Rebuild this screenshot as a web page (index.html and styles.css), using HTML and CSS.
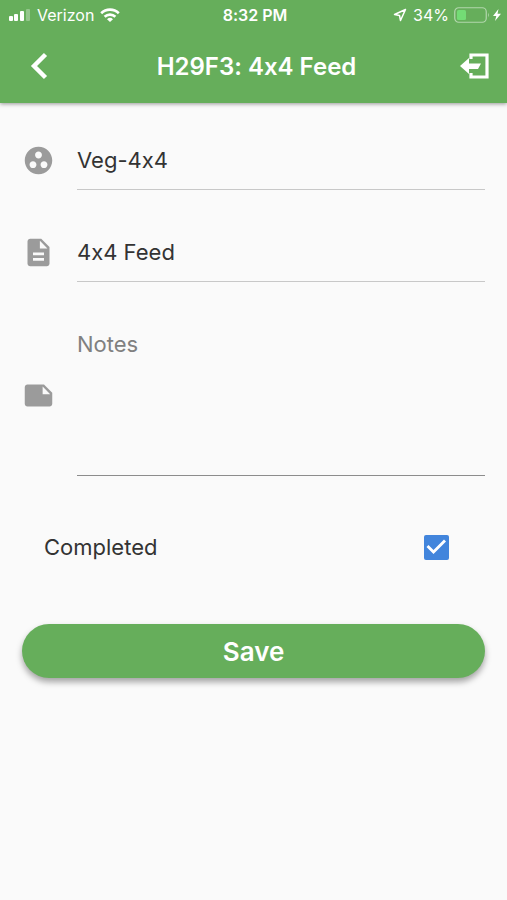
FILE: index.html
```html
<!doctype html>
<html lang="en">
<head>
<meta charset="utf-8">
<meta name="viewport" content="width=device-width, initial-scale=1">
<title>H29F3: 4x4 Feed</title>
<link rel="stylesheet" href="styles.css">
</head>
<body>
<header class="top">
	<div class="status">
		<div class="carrier">
			<svg width="22" height="14" viewBox="0 0 22 14" fill="#fff">
				<rect x="0" y="8" width="4" height="5" rx="1"/>
				<rect x="5" y="6" width="4" height="7" rx="1"/>
				<rect x="11" y="3" width="4" height="10" rx="1"/>
				<rect x="17" y="1" width="4" height="12" rx="1" opacity=".3"/>
			</svg>
			<span>Verizon</span>
			<svg width="20" height="14" viewBox="0 0 20 14" fill="none" stroke="#fff" stroke-width="2.6">
				<path d="M1.200 5.200a12.600 12.600 0 0 1 17.600 0"/>
				<path d="M4.600 8.800a7.800 7.800 0 0 1 10.800 0"/>
				<path d="M10 14L7 11.200a4.300 4.300 0 0 1 6 0z" fill="#fff" stroke="none"/>
			</svg>
		</div>
		<span class="time">8:32 PM</span>
		<div class="power">
			<svg width="14" height="14" viewBox="0 0 14 14" fill="none" stroke="#fff" stroke-width="1.5" stroke-linejoin="round">
				<path d="M12.500 1.500L1.500 6.500l5 1 1 5z"/>
			</svg>
			<span>34%</span>
			<svg class="battery" width="36" height="16" viewBox="0 0 36 16">
				<rect x=".75" y=".75" width="31.5" height="14.5" rx="4" fill="none" stroke="#fff" stroke-opacity=".5" stroke-width="1.2"/>
				<rect x="3" y="3" width="9" height="10" rx="1.5" fill="#73dc75"/>
				<path d="M34 5.500q1.800 2.500 0 5z" fill="#fff" opacity=".5"/>
			</svg>
			<svg width="8" height="12" viewBox="0 0 8 12" fill="#fff">
				<path d="M5.500 0L0 7h3.300L2 12l6-7.200H4.500z"/>
			</svg>
		</div>
	</div>
	<div class="bar">
		<button class="icon-btn" type="button" aria-label="Back">
			<svg width="32" height="32" viewBox="0 0 32 32" fill="none" stroke="#fff" stroke-width="4.4">
				<path d="M23.500 3.500L12 15l11.500 11.500"/>
			</svg>
		</button>
		<h1>H29F3: 4x4 Feed</h1>
		<button class="icon-btn" type="button" aria-label="Exit">
			<svg width="32" height="32" viewBox="0 0 32 32">
				<path d="M12 8V4h16v22H12v-4" fill="none" stroke="#fff" stroke-width="3.2"/>
				<path d="M1 15l9-8v5.500h12l-3 5.500h-9v5z" fill="#fff"/>
			</svg>
		</button>
	</div>
</header>

<form class="form">
	<div class="field">
		<svg class="icon" viewBox="0 0 24 24">
			<path d="M12 2C6.480 2 2 6.480 2 12s4.480 10 10 10 10-4.480 10-10S17.520 2 12 2zM8 17.500c-1.380 0-2.500-1.120-2.500-2.500s1.120-2.500 2.500-2.500 2.500 1.120 2.500 2.500-1.120 2.500-2.500 2.500zM9.500 8c0-1.380 1.120-2.500 2.500-2.500s2.500 1.120 2.500 2.500-1.120 2.500-2.500 2.500S9.500 9.380 9.500 8zm6.500 9.500c-1.380 0-2.500-1.120-2.500-2.500s1.120-2.500 2.500-2.500 2.500 1.120 2.500 2.500-1.120 2.500-2.500 2.500z"/>
		</svg>
		<input type="text" value="Veg-4x4" aria-label="Group">
	</div>
	<div class="field">
		<svg class="icon" viewBox="0 0 24 24">
			<path d="M14 2H6c-1.100 0-1.990.9-1.990 2L4 20c0 1.100.89 2 1.990 2H18c1.100 0 2-.9 2-2V8l-6-6zm2 16H8v-2h8v2zm0-4H8v-2h8v2zm-3-5V3.500L18.500 9H13z"/>
		</svg>
		<input type="text" value="4x4 Feed" aria-label="Title">
	</div>
	<div class="field">
		<svg class="icon" viewBox="0 0 24 24">
			<path d="M22 10l-6-6H4c-1.100 0-2 .9-2 2v12.010c0 1.100.9 1.990 2 1.990l16-.01c1.100 0 2-.89 2-1.990v-8zm-7-4.500l5.500 5.500H15V5.500z"/>
		</svg>
		<textarea placeholder="Notes" aria-label="Notes"></textarea>
	</div>
	<div class="check">
		<label for="completed">Completed</label>
		<input type="checkbox" id="completed" checked>
	</div>
	<button class="save" type="button">Save</button>
</form>
</body>
</html>
```
FILE: styles.css
```css
*{margin: 0;padding: 0;box-sizing: border-box;}
/* calt off, otherwise Inter turns the x in 4x4 into a multiplication sign */
body{background: #fafafa;color: #333;font-family: Inter, "Liberation Sans", sans-serif;font-size: 22px;font-feature-settings: "calt" 0;}
svg{display: block;flex: none;}
button{border: none;background: none;font-family: inherit;cursor: pointer;}

.top{background: #66ae5b;color: #fff;box-shadow: 0 1px 4px rgba(0,0,0,0.4);}
.status{display: grid;grid-template-columns: 1fr auto 1fr;align-items: center;height: 30px;padding: 0 6px 0 9px;font-size: 16px;}
.carrier,.power{display: flex;align-items: center;gap: 6px;}
.power{justify-content: flex-end;}
.battery{margin: 0 -3px 0 -1px;}
.time{font-weight: 600;}
.bar{display: flex;align-items: center;justify-content: space-between;height: 73px;padding: 0 16px 0 22px;}
.icon-btn{width: 32px;height: 32px;}
h1{font-size: 24px;font-weight: 600;}

.form{padding: 27px 22px;}
.field{display: flex;align-items: center;gap: 22px;margin-bottom: 32px;}
.icon{width: 33px;height: 33px;fill: #9b9b9b;}
.field input,.field textarea{
	flex: 1;min-width: 0;height: 60px;
	border: none;border-bottom: 1px solid #c8c8c8;outline: none;
	background: none;color: #333;font: inherit;font-feature-settings: inherit;
}
.field textarea{height: 162px;padding-top: 15px;line-height: 30px;border-color: #8c8c8c;resize: none;}
.field textarea::placeholder{color: #808080;}

.check{display: flex;align-items: center;justify-content: space-between;height: 78px;padding: 0 36px 0 22px;}
.check input{width: 25px;height: 25px;appearance: none;border-radius: 2px;border: 2px solid #777;}
.check input:checked{background: #4285dc;border: none;}
.check input:checked::before{
	content: "";display: block;height: 100%;background: #fff;
	clip-path: polygon(18% 42%, 10% 50%, 38% 78%, 88% 28%, 80% 20%, 38% 62%);
}

.save{
	display: block;width: 100%;height: 54px;margin-top: 38px;border-radius: 27px;
	background: #66ae5b;color: #fff;font-size: 26px;font-weight: 600;
	box-shadow: 0 4px 6px rgba(0,0,0,0.35);
}
```
